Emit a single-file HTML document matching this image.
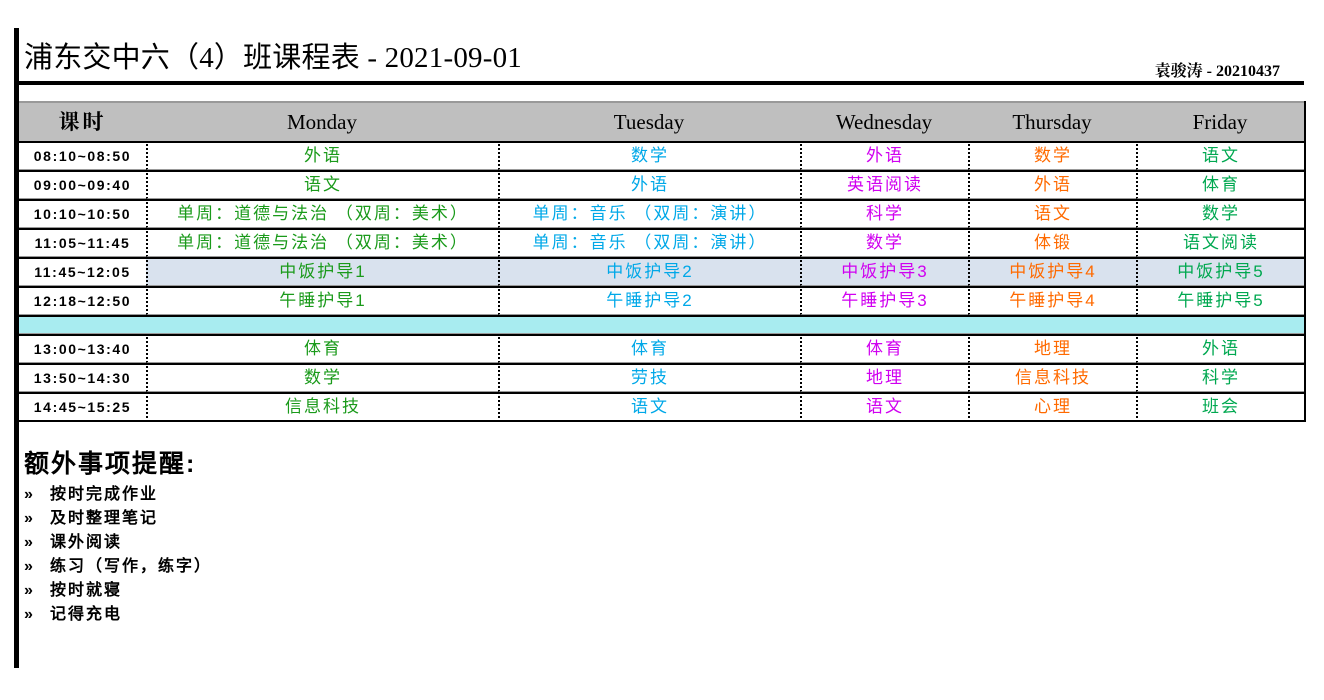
<!DOCTYPE html>
<html><head><meta charset="utf-8"><style>
body{margin:0;background:#fff;width:1324px;height:700px;position:relative;overflow:hidden;font-family:"Liberation Serif","Noto Serif CJK SC",serif}
.bar{position:absolute;left:14px;top:28px;width:5px;height:640px;background:#000}
.title{position:absolute;left:24px;top:40px;font-size:29px;line-height:36px;color:#000;font-family:"Liberation Serif","Noto Sans CJK SC",serif;letter-spacing:.2px}
.who{position:absolute;right:44px;top:58px;font-size:16px;font-weight:bold;font-family:"Liberation Serif","Noto Serif CJK SC",serif}
.hr{position:absolute;left:19px;top:81px;width:1285px;height:4px;background:#000}
table{position:absolute;left:19px;top:101px;border-collapse:separate;border-spacing:0;width:1286px;table-layout:fixed;border-right:2px solid #000}
td{padding:0;text-align:center;border-top:2px solid #000;border-bottom:1px solid #999;font-family:"Liberation Sans","WenQuanYi Zen Hei",sans-serif;font-size:17px;height:26px;line-height:26px;white-space:nowrap;overflow:hidden;letter-spacing:2px}
td+td{border-left:2px dotted #000}
tr.h td{background:#bfbfbf;height:35px;line-height:38px;font-family:"Liberation Serif","Noto Serif CJK SC",serif;font-size:21px;border-top:2px solid #999;border-bottom:none;border-left:none;letter-spacing:0}
tr.h td:first-child{font-weight:bold;letter-spacing:3px}
td.t{font-size:14px;font-weight:bold;letter-spacing:1.6px;font-family:"Liberation Sans","WenQuanYi Zen Hei",sans-serif}
tr.l td{background:#d9e2ee}
tr.l td.t{background:#fff}
tr.c td{background:#a8ecf0;height:16px;line-height:16px;border-left:none}
.m{color:#1a9a1a}.u{color:#00a8e8}.w{color:#d000f0}.r{color:#ff6a00}.f{color:#00a850}
.ex{position:absolute;left:24px;top:444px;font-size:25px;letter-spacing:2px;font-family:"Liberation Sans","WenQuanYi Zen Hei",sans-serif;font-weight:bold}
.li{position:absolute;left:24px;font-size:16px;font-weight:bold;letter-spacing:2px;font-family:"Liberation Sans","WenQuanYi Zen Hei",sans-serif}
.li b{display:inline-block;width:26px}
</style></head><body>
<div class="bar"></div>
<div class="title">浦东交中六（4）班课程表 - 2021-09-01</div>
<div class="who">袁骏涛 - 20210437</div>
<div class="hr"></div>
<table>
<colgroup><col style="width:127px"><col style="width:352px"><col style="width:302px"><col style="width:168px"><col style="width:168px"><col style="width:168px"></colgroup>
<tr class="h"><td>课时</td><td>Monday</td><td>Tuesday</td><td>Wednesday</td><td>Thursday</td><td>Friday</td></tr>
<tr><td class="t">08:10~08:50</td><td class="m">外语</td><td class="u">数学</td><td class="w">外语</td><td class="r">数学</td><td class="f">语文</td></tr>
<tr><td class="t">09:00~09:40</td><td class="m">语文</td><td class="u">外语</td><td class="w">英语阅读</td><td class="r">外语</td><td class="f">体育</td></tr>
<tr><td class="t">10:10~10:50</td><td class="m">单周：道德与法治 （双周：美术）</td><td class="u">单周：音乐 （双周：演讲）</td><td class="w">科学</td><td class="r">语文</td><td class="f">数学</td></tr>
<tr><td class="t">11:05~11:45</td><td class="m">单周：道德与法治 （双周：美术）</td><td class="u">单周：音乐 （双周：演讲）</td><td class="w">数学</td><td class="r">体锻</td><td class="f">语文阅读</td></tr>
<tr class="l"><td class="t">11:45~12:05</td><td class="m">中饭护导1</td><td class="u">中饭护导2</td><td class="w">中饭护导3</td><td class="r">中饭护导4</td><td class="f">中饭护导5</td></tr>
<tr><td class="t">12:18~12:50</td><td class="m">午睡护导1</td><td class="u">午睡护导2</td><td class="w">午睡护导3</td><td class="r">午睡护导4</td><td class="f">午睡护导5</td></tr>
<tr class="c"><td></td><td></td><td></td><td></td><td></td><td></td></tr>
<tr><td class="t">13:00~13:40</td><td class="m">体育</td><td class="u">体育</td><td class="w">体育</td><td class="r">地理</td><td class="f">外语</td></tr>
<tr><td class="t">13:50~14:30</td><td class="m">数学</td><td class="u">劳技</td><td class="w">地理</td><td class="r">信息科技</td><td class="f">科学</td></tr>
<tr><td class="t" style="border-bottom:2px solid #000">14:45~15:25</td><td class="m" style="border-bottom:2px solid #000">信息科技</td><td class="u" style="border-bottom:2px solid #000">语文</td><td class="w" style="border-bottom:2px solid #000">语文</td><td class="r" style="border-bottom:2px solid #000">心理</td><td class="f" style="border-bottom:2px solid #000">班会</td></tr>
</table>
<div class="ex">额外事项提醒:</div>
<div class="li" style="top:480px"><b>»</b>按时完成作业</div>
<div class="li" style="top:504px"><b>»</b>及时整理笔记</div>
<div class="li" style="top:528px"><b>»</b>课外阅读</div>
<div class="li" style="top:552px"><b>»</b>练习（写作，练字）</div>
<div class="li" style="top:576px"><b>»</b>按时就寝</div>
<div class="li" style="top:600px"><b>»</b>记得充电</div>
</body></html>
